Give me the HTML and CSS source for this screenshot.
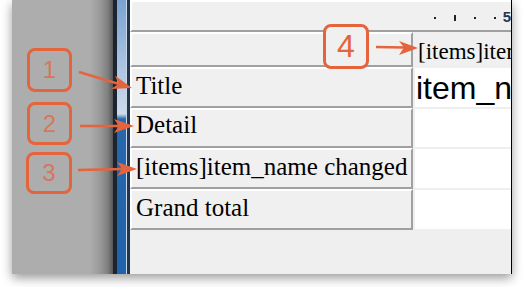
FILE: index.html
```html
<!DOCTYPE html>
<html lang="en">
<head>
    <meta charset="UTF-8">
    <title>Report designer bands</title>
    <link rel="stylesheet" href="styles.css">
</head>
<body>
    <div class="page">
        <div class="shot">
            <div class="sidebar"></div>
            <div class="splitter"><div class="bar"></div></div>

            <!-- Design surface -->
            <div class="design">
                <div class="ruler">
                    <span class="tick"></span>
                    <span class="tick tall"></span>
                    <span class="tick"></span>
                    <span class="tick"></span>
                    <span class="ruler-num">5</span>
                </div>
                <div class="bands">
                    <div class="label row-head"></div>
                    <div class="cell head">[items]item_name</div>

                    <div class="label">Title</div>
                    <div class="cell big">item_name</div>

                    <div class="label row-short">Detail</div>
                    <div class="cell"></div>

                    <div class="label">[items]item_name changed</div>
                    <div class="cell"></div>

                    <div class="label">Grand total</div>
                    <div class="cell"></div>
                </div>
            </div>
        </div>

        <!-- Callouts -->
        <div class="callout c1">1</div>
        <div class="callout c2">2</div>
        <div class="callout c3">3</div>
        <div class="callout c4">4</div>

        <svg class="arrows" width="524" height="287" viewBox="0 0 524 287">
            <g stroke="#e4643c" stroke-width="2.5" fill="none">
                <line x1="79" y1="72" x2="119" y2="84"/>
                <line x1="80" y1="126" x2="120" y2="126"/>
                <line x1="78" y1="170" x2="123" y2="169"/>
                <line x1="376" y1="47" x2="405" y2="47.5"/>
            </g>
            <g fill="#e4643c">
                <polygon points="132,88 114.9,75.5 118.6,84 110.9,88.9"/>
                <polygon points="134,126 114,119 119,126 114,133"/>
                <polygon points="137,169 117,162 122,169 117,176"/>
                <polygon points="418,48 399,41 404,47.5 399,55"/>
            </g>
        </svg>
    </div>
</body>
</html>
```

FILE: styles.css
```css
:root {
    --orange: #e4643c;
    --cell: #f0f0f0;
    --line: #a0a0a0;
    --surface: #efefef;
}

* {
    margin: 0;
    padding: 0;
    box-sizing: border-box;
}

body {
    background: #fff;
    width: 524px;
    height: 287px;
    overflow: hidden;
}

.page {
    position: relative;
    width: 524px;
    height: 287px;
}

.shot {
    display: flex;
    margin-left: 12px;
    width: 500px;
    height: 274px;
    box-shadow: 0 4px 10px rgba(0,0,0,0.4);
}

.sidebar {
    width: 101px;
    background: linear-gradient(to right, #adadad 0, #adadad 78px, #999 88px, #7e7e7e 96px, #555 101px);
}

.splitter {
    width: 17px;
    border-left: 4px solid #1b2430;
    border-right: 3px solid #22344e;
    display: flex;
}

.bar {
    flex: 1;
    border-right: 1px solid #c9d8ea;
    background: linear-gradient(to bottom, #79a2d2 0, #a6c1df 60px, #cddbea 114px, #2868ac 119px, #1f63aa 100%);
}

.design {
    flex: 1;
    background: var(--surface);
    border-right: 1px solid #000;
    overflow: hidden;
}

.ruler {
    height: 32px;
    background: var(--cell);
    border-top: 2px solid #fff;
    border-left: 2px solid #fff;
    border-bottom: 2px solid var(--line);
    display: flex;
    justify-content: flex-end;
    align-items: center;
    padding-top: 4px;
    gap: 18px;
}

.tick {
    width: 2px;
    height: 2px;
    background: #222;
}

.tick.tall {
    height: 6px;
}

.ruler-num {
    margin-left: -11px;
    font-family: "Liberation Sans", sans-serif;
    font-size: 15px;
    font-weight: bold;
    line-height: 1;
    color: #2a3550;
    margin-top: -4px;
}

.bands {
    display: grid;
    grid-template-columns: 283px 1fr;
    grid-template-rows: 35px 41px 40px 41px 41px;
}

.label {
    background: var(--cell);
    border-top: 2px solid #fff;
    border-left: 2px solid #fff;
    border-right: 2px solid var(--line);
    border-bottom: 2px solid var(--line);
    padding: 3px 4px 0;
    font-family: "Liberation Serif", serif;
    font-size: 25px;
    line-height: 28px;
    color: #000;
    white-space: nowrap;
}

.label.row-short {
    padding-top: 1px;
}

.cell {
    background: #fff;
    border-top: 1px solid var(--surface);
    border-bottom: 1px solid var(--surface);
    border-left: 2px solid var(--surface);
    white-space: nowrap;
    overflow: hidden;
    color: #000;
}

.cell.head {
    background: var(--cell);
    font-family: "Liberation Serif", serif;
    font-size: 23px;
    line-height: 26px;
    padding: 6px 0 0 3px;
}

.cell.big {
    font-family: "Liberation Sans", sans-serif;
    font-size: 32px;
    line-height: 32px;
    padding: 4px 0 0 1px;
}

.callout {
    position: absolute;
    width: 45px;
    height: 44px;
    border: 3px solid var(--orange);
    border-radius: 8px;
    display: flex;
    justify-content: center;
    align-items: center;
    font-family: "Liberation Sans", sans-serif;
    font-size: 24px;
    color: rgba(228,100,60,0.75);
}

.c1 { left: 27px; top: 48px; }
.c2 { left: 27px; top: 102px; height: 43px; }
.c3 { left: 26px; top: 152px; width: 46px; height: 42px; }

.c4 {
    left: 323px;
    top: 24px;
    width: 46px;
    height: 45px;
    font-size: 32px;
    color: var(--orange);
    background: var(--cell);
}

.arrows {
    position: absolute;
    left: 0;
    top: 0;
}
```
